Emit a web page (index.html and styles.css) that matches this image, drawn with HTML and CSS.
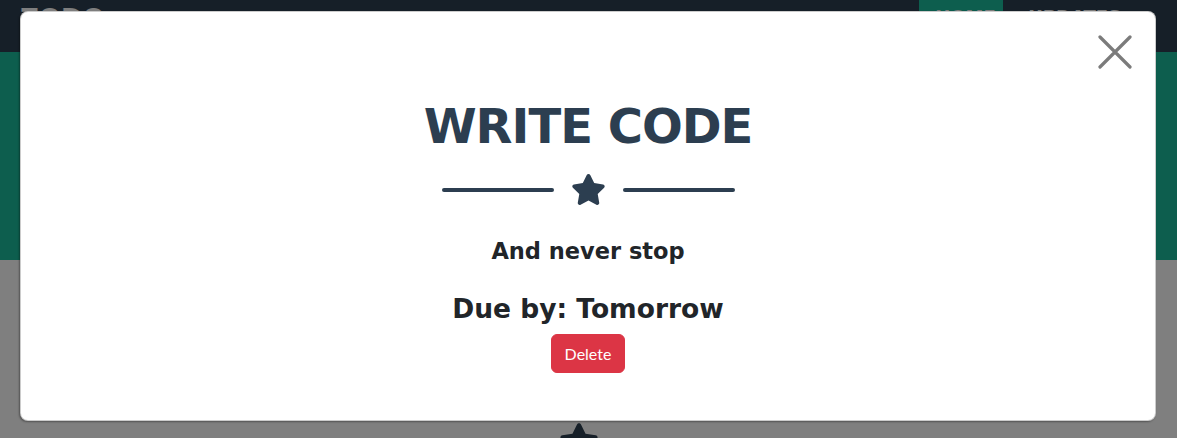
FILE: index.html
```html
<!DOCTYPE html>
<html lang="en">
<head>
<meta charset="utf-8">
<title>Task</title>
<link rel="stylesheet" href="styles.css">
</head>
<body>
<nav class="navbar">
  <div class="brand">ZODO</div>
  <ul class="nav">
    <li class="nav-item active">HOME</li>
    <li class="nav-item">UPDATES</li>
  </ul>
</nav>
<header class="masthead"></header>
<section class="page-section">
  <svg class="section-star" viewBox="0 0 576 512"><path d="M259.3 17.8L194 150.2 47.9 171.5c-26.2 3.8-36.7 36.1-17.7 54.6l105.7 103-25 145.5c-4.5 26.3 23.2 46 46.4 33.7L288 439.6l130.7 68.7c23.2 12.2 50.9-7.4 46.4-33.7l-25-145.5 105.7-103c19-18.5 8.5-50.8-17.7-54.6L382 150.2 316.7 17.8c-11.7-23.6-45.6-23.9-57.4 0z"/></svg>
</section>

<div class="backdrop"></div>
<div class="modal">
  <div class="modal-content">
    <button class="btn-close" aria-label="Close">
      <svg viewBox="0 0 34 34"><path d="M2 2L32 32M32 2L2 32"/></svg>
    </button>
    <h2 class="modal-title">WRITE CODE</h2>
    <div class="divider">
      <span class="divider-line"></span>
      <svg class="divider-star" viewBox="0 0 576 512"><path d="M259.3 17.8L194 150.2 47.9 171.5c-26.2 3.8-36.7 36.1-17.7 54.6l105.7 103-25 145.5c-4.5 26.3 23.2 46 46.4 33.7L288 439.6l130.7 68.7c23.2 12.2 50.9-7.4 46.4-33.7l-25-145.5 105.7-103c19-18.5 8.5-50.8-17.7-54.6L382 150.2 316.7 17.8c-11.7-23.6-45.6-23.9-57.4 0z"/></svg>
      <span class="divider-line"></span>
    </div>
    <h4 class="subtitle">And never stop</h4>
    <h3 class="due">Due by: Tomorrow</h3>
    <button class="btn-delete">Delete</button>
  </div>
</div>
</body>
</html>
```

FILE: styles.css
```css
* { box-sizing: border-box; }
html, body { margin: 0; padding: 0; }
body {
  width: 1177px;
  height: 438px;
  overflow: hidden;
  background: #ffffff;
  font-family: Lato, "Liberation Sans", sans-serif;
  position: relative;
}

.navbar {
  height: 52px;
  background: #2c3e50;
  display: flex;
  align-items: stretch;
  justify-content: space-between;
  padding: 0 0 0 20px;
}
.brand {
  font-family: "DejaVu Sans", sans-serif;
  font-weight: 700;
  font-size: 26px;
  color: #ffffff;
  padding-top: 4px;
}
.nav {
  list-style: none;
  margin: 0;
  padding: 0 40px 0 0;
  display: flex;
  gap: 25px;
}
.nav-item {
  font-family: "DejaVu Sans", sans-serif;
  font-weight: 700;
  font-size: 18px;
  color: #ffffff;
  padding: 6px 16px 0;
  width: 84px;
}
.nav-item.active {
  background: #1abc9c;
}
.nav-item + .nav-item { width: auto; padding-left: 0; }

.masthead {
  height: 208px;
  background: #1abc9c;
}
.page-section {
  height: 178px;
  display: flex;
  justify-content: center;
  padding-top: 163px;
  padding-right: 20px;
}
.section-star {
  width: 40px;
  height: 36px;
  fill: #2c3e50;
}

.backdrop {
  position: absolute;
  inset: 0;
  background: rgba(0, 0, 0, 0.5);
}

.modal {
  position: absolute;
  inset: 0;
  padding: 11px 21px 0 20px;
}
.modal-content {
  position: relative;
  height: 410px;
  background: #ffffff;
  border: 1px solid rgba(0, 0, 0, 0.2);
  border-radius: 8px;
  box-shadow: -1px 1px 2px rgba(0, 0, 0, 0.35);
  display: flex;
  flex-direction: column;
  align-items: center;
  padding-top: 85px;
}

.btn-close {
  position: absolute;
  top: 23px;
  right: 23px;
  width: 34px;
  height: 34px;
  padding: 0;
  border: 0;
  background: transparent;
}
.btn-close svg {
  width: 34px;
  height: 34px;
  stroke: #7b7b7b;
  stroke-width: 3.2;
  stroke-linecap: round;
  fill: none;
  display: block;
}

.modal-title {
  margin: 0;
  font-family: "DejaVu Sans", sans-serif;
  font-weight: 700;
  font-size: 48px;
  line-height: 58px;
  color: #2c3e50;
  letter-spacing: -1px;
}

.divider {
  display: flex;
  align-items: center;
  margin-top: 19px;
}
.divider-line {
  width: 112px;
  height: 4px;
  border-radius: 16px;
  background: #2c3e50;
}
.divider-star {
  width: 35px;
  height: 31px;
  margin: 0 17px;
  fill: #2c3e50;
}

.subtitle {
  margin: 32px 0 0;
  font-family: "DejaVu Sans", sans-serif;
  font-weight: 700;
  font-size: 22.5px;
  line-height: 28px;
  color: #212529;
}
.due {
  margin: 28px 0 0;
  font-family: "DejaVu Sans", sans-serif;
  font-weight: 700;
  font-size: 26.5px;
  line-height: 32px;
  color: #212529;
}
.btn-delete {
  margin-top: 9px;
  height: 39px;
  padding: 0 13px;
  border: 1px solid #dc3545;
  border-radius: 6px;
  background: #dc3545;
  color: #ffffff;
  font-family: Lato, sans-serif;
  font-size: 16px;
}
```
